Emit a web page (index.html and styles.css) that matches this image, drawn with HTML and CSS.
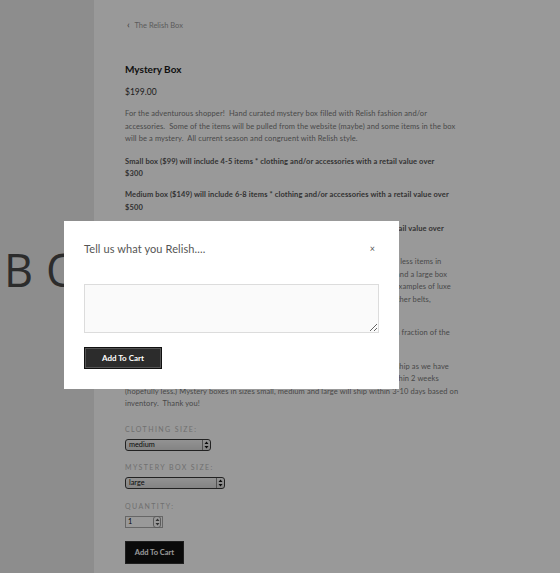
FILE: index.html
```html
<!DOCTYPE html>
<html>
<head>
<meta charset="utf-8">
<link rel="stylesheet" href="styles.css">
</head>
<body>
<div class="page">
  <aside class="side">
    <div class="brand">BOX</div>
  </aside>
  <main class="content">
    <a class="back" href="#"><span class="chev">&#8249;</span> The Relish Box</a>
    <h1 class="title">Mystery Box</h1>
    <div class="price">$199.00</div>
    <div class="desc">
      <p class="first">For the adventurous shopper!&nbsp; Hand curated mystery box filled with Relish fashion and/or<br>accessories.&nbsp; Some of the items will be pulled from the website (maybe) and some items in the box<br>will be a mystery.&nbsp; All current season and congruent with Relish style.</p>
      <p class="b">Small box ($99) will include 4-5 items * clothing and/or accessories with a retail value over<br>$300</p>
      <p class="b">Medium box ($149) will include 6-8 items * clothing and/or accessories with a retail value over<br>$500</p>
      <p class="b">Large box ($199) will include 8-10 items * clothing and/or accessories with a retail value over<br>$800</p>
      <p>* Each box will include a mix of clothing and accessories. A small box will have far less items in<br>it than a medium box would, a medium box will have less items than a large box, and a large box<br>will have the most luxe items included in it. Some of the items may be designer. Examples of luxe<br>items would be designer handbags, designer jewelry, silk scarves and genuine leather belts,<br>shoes and more.</p>
      <p>Every box is a great value and you will receive all of your fabulous items for only a fraction of the<br>original retail price!</p>
      <p>Please allow up to 2 weeks extra time for custom boxes with special requests to ship as we have<br>to hand pick each and every item just for you. All custom sized boxes will ship within 2 weeks<br>(hopefully less.) Mystery boxes in sizes small, medium and large will ship within 3-10 days based on<br>inventory.&nbsp; Thank you!</p>
    </div>
    <div class="field">
      <div class="label">Clothing Size:</div>
      <div class="select s1"><span>medium</span><span class="arr"><svg width="5" height="8" viewBox="0 0 5 8"><path d="M2.5 0.5L4.5 3H0.5Z M2.5 7.5L4.5 5H0.5Z" fill="#111"/></svg></span></div>
    </div>
    <div class="field f2">
      <div class="label">Mystery Box Size:</div>
      <div class="select s2"><span>large</span><span class="arr"><svg width="5" height="8" viewBox="0 0 5 8"><path d="M2.5 0.5L4.5 3H0.5Z M2.5 7.5L4.5 5H0.5Z" fill="#111"/></svg></span></div>
    </div>
    <div class="field qf">
      <div class="label">Quantity:</div>
      <div class="qty"><span>1</span><span class="spin"><svg width="5" height="8" viewBox="0 0 5 8"><path d="M2.5 0.5L4.5 3H0.5Z M2.5 7.5L4.5 5H0.5Z" fill="#555"/></svg></span></div>
    </div>
    <button class="cart">Add To Cart</button>
  </main>
</div>
<div class="overlay"></div>
<div class="modal">
  <div class="modal-head">
    <span class="modal-title">Tell us what you Relish....</span>
    <span class="close">&#215;</span>
  </div>
  <textarea class="note"></textarea>
  <button class="modal-btn">Add To Cart</button>
</div>
</body>
</html>
```
FILE: styles.css
```css
html, body {
  margin: 0;
  padding: 0;
  background: #fff;
  height: 100%;
  overflow: hidden;
}
body {
  font-family: "Lato", "Liberation Sans", sans-serif;
}
.page {
  display: flex;
  min-height: 573px;
}
.side {
  width: 94px;
  flex: none;
  background: #ebebeb;
  overflow: hidden;
}
.brand {
  margin-top: 246px;
  margin-left: 4px;
  font-family: "Open Sans", sans-serif;
  font-weight: 400;
  font-size: 45px;
  letter-spacing: 13px;
  color: #4a4a4a;
  white-space: nowrap;
  line-height: 48px;
}
.content {
  padding: 18px 0 0 31px;
  flex: 1;
}
.back {
  display: block;
  font-size: 7.5px;
  color: #999;
  text-decoration: none;
  margin-left: 2px;
  line-height: 12px;
}
.chev {
  font-size: 10px;
  margin-right: 3px;
  color: #666;
}
.title {
  margin: 30px 0 0;
  font-size: 10px;
  font-weight: 700;
  color: #1a1a1a;
  line-height: 14px;
}
.price {
  margin-top: 10px;
  font-size: 8.5px;
  color: #333;
  line-height: 12px;
}
.desc {
  margin-top: 10px;
  font-size: 7.5px;
  letter-spacing: 0.1px;
  line-height: 12.5px;
  color: #7a7a7a;
  white-space: nowrap;
}
.desc p {
  margin: 0 0 8.5px;
}
.desc p.first {
  margin-bottom: 10px;
}
.desc .b {
  font-weight: 700;
  color: #555;
  letter-spacing: 0.12px;
}
.field {
  margin-top: 13px;
}
.field.f2 {
  margin-top: 11px;
}
.field.qf {
  margin-top: 12px;
}
.label {
  text-transform: uppercase;
  font-size: 7px;
  letter-spacing: 1.4px;
  color: #bbb;
  line-height: 10px;
  margin-bottom: 5px;
}
.select {
  display: flex;
  align-items: center;
  justify-content: space-between;
  height: 10px;
  border: 1px solid #3a3a3a;
  border-radius: 3px;
  background: linear-gradient(#f4f4f4, #dcdcdc);
  font-size: 7.3px;
  color: #111;
}
.select span:first-child {
  padding-left: 3px;
}
.s1 { width: 84px; }
.s2 { width: 98px; }
.arr {
  display: flex;
  align-items: center;
  justify-content: center;
  width: 7px;
  height: 100%;
  border-left: 1px solid #888;
}
.qty {
  display: flex;
  align-items: center;
  justify-content: space-between;
  width: 36px;
  height: 10px;
  border: 1px solid #aaa;
  background: #fff;
  font-size: 7.3px;
  color: #111;
}
.qty span:first-child { padding-left: 2px; }
.spin {
  display: flex;
  align-items: center;
  justify-content: center;
  width: 6px;
  height: 10px;
  border: 1px solid #999;
  border-radius: 3px;
  margin-right: 1px;
}
.cart {
  display: block;
  margin-top: 13px;
  width: 59px;
  height: 23px;
  background: #111;
  color: #fff;
  border: 1px solid #333;
  font-family: "Lato", sans-serif;
  font-weight: 700;
  font-size: 7.5px;
  padding: 0;
}
.overlay {
  position: fixed;
  inset: 0;
  background: rgba(0, 0, 0, 0.4);
}
.modal {
  position: fixed;
  left: 64px;
  top: 221px;
  width: 335px;
  height: 168px;
  box-sizing: border-box;
  background: #fff;
  padding: 20px 20px 0;
  display: flex;
  flex-direction: column;
  align-items: flex-start;
}
.modal-head {
  display: flex;
  justify-content: space-between;
  align-items: center;
  width: 295px;
  height: 12px;
  margin-top: 1px;
}
.modal-title {
  font-size: 11px;
  color: #555;
  font-weight: 400;
  letter-spacing: 0.1px;
}
.close {
  font-size: 9px;
  color: #555;
  margin-right: 4px;
}
.note {
  margin: 30px 0 0;
  width: 295px;
  height: 49px;
  box-sizing: border-box;
  border: 1px solid #dcdcdc;
  background: #fafafa;
  resize: vertical;
  padding: 4px;
}
.modal-btn {
  margin-top: 14px;
  width: 78px;
  height: 22px;
  background: #2c2c2c;
  color: #fff;
  border: 1px solid #111;
  box-shadow: inset 0 0 0 1px #555;
  font-family: "Lato", sans-serif;
  font-weight: 700;
  font-size: 8px;
  padding: 0;
}
```
